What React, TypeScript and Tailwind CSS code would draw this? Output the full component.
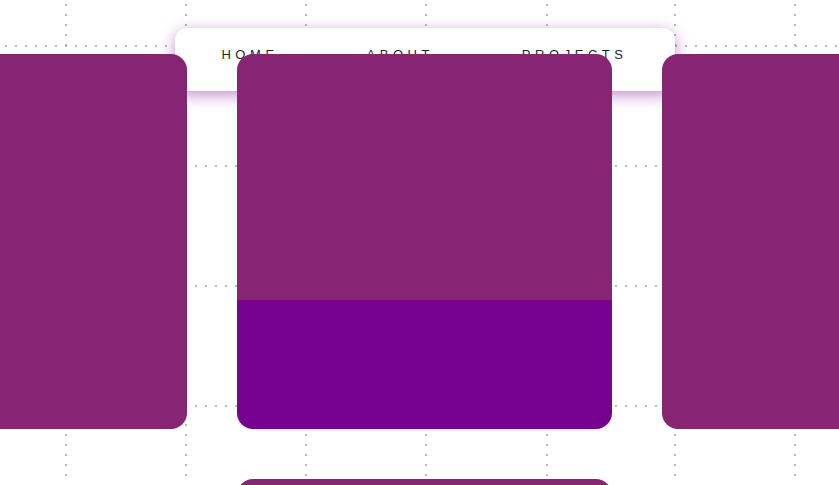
const gridX = [66, 186, 306, 426, 547, 675, 795];
const gridY = [46, 166, 286, 406];

function DotGrid() {
  return (
    <svg className="absolute inset-0 h-full w-full" width="839" height="485">
      {gridX.map((x) => (
        <line
          key={`v${x}`}
          x1={x}
          y1={5}
          x2={x}
          y2={485}
          stroke="#a3a3a3"
          strokeWidth={2}
          strokeLinecap="round"
          strokeDasharray="0 10"
        />
      ))}
      {gridY.map((y) => (
        <line
          key={`h${y}`}
          x1={6}
          y1={y}
          x2={839}
          y2={y}
          stroke="#a3a3a3"
          strokeWidth={2}
          strokeLinecap="round"
          strokeDasharray="0 10"
        />
      ))}
    </svg>
  );
}

const links = ['HOME', 'ABOUT', 'PROJECTS'];

export default function App() {
  return (
    <div className="relative h-[485px] w-full overflow-hidden bg-white">
      <DotGrid />

      <div className="relative flex flex-col pl-[10px]">
        <nav className="mx-auto mt-[28px] flex h-[63px] w-[500px] items-start justify-around rounded-xl bg-white px-[3px] pt-[17px] shadow-[0_4px_16px_rgba(119,1,145,0.45)]">
          {links.map((link) => (
            <a
              key={link}
              href="#"
              className="text-[13px] leading-5 tracking-[0.35em] text-[#1f1f1f] font-['Liberation_Sans',Arial,sans-serif]"
            >
              {link}
            </a>
          ))}
        </nav>

        <div className="relative z-10 -mt-[37px] flex items-start justify-center gap-[50px]">
          <div className="h-[375px] w-[375px] shrink-0 rounded-2xl bg-[#862672]" />

          <div className="flex w-[375px] shrink-0 flex-col gap-[50px]">
            <div className="flex h-[375px] flex-col overflow-hidden rounded-2xl">
              <div className="h-[246px] bg-[#862672]" />
              <div className="flex-1 bg-[#770191]" />
            </div>
            <div className="h-[375px] rounded-2xl bg-[#862672]" />
          </div>

          <div className="h-[375px] w-[375px] shrink-0 rounded-2xl bg-[#862672]" />
        </div>
      </div>
    </div>
  );
}
